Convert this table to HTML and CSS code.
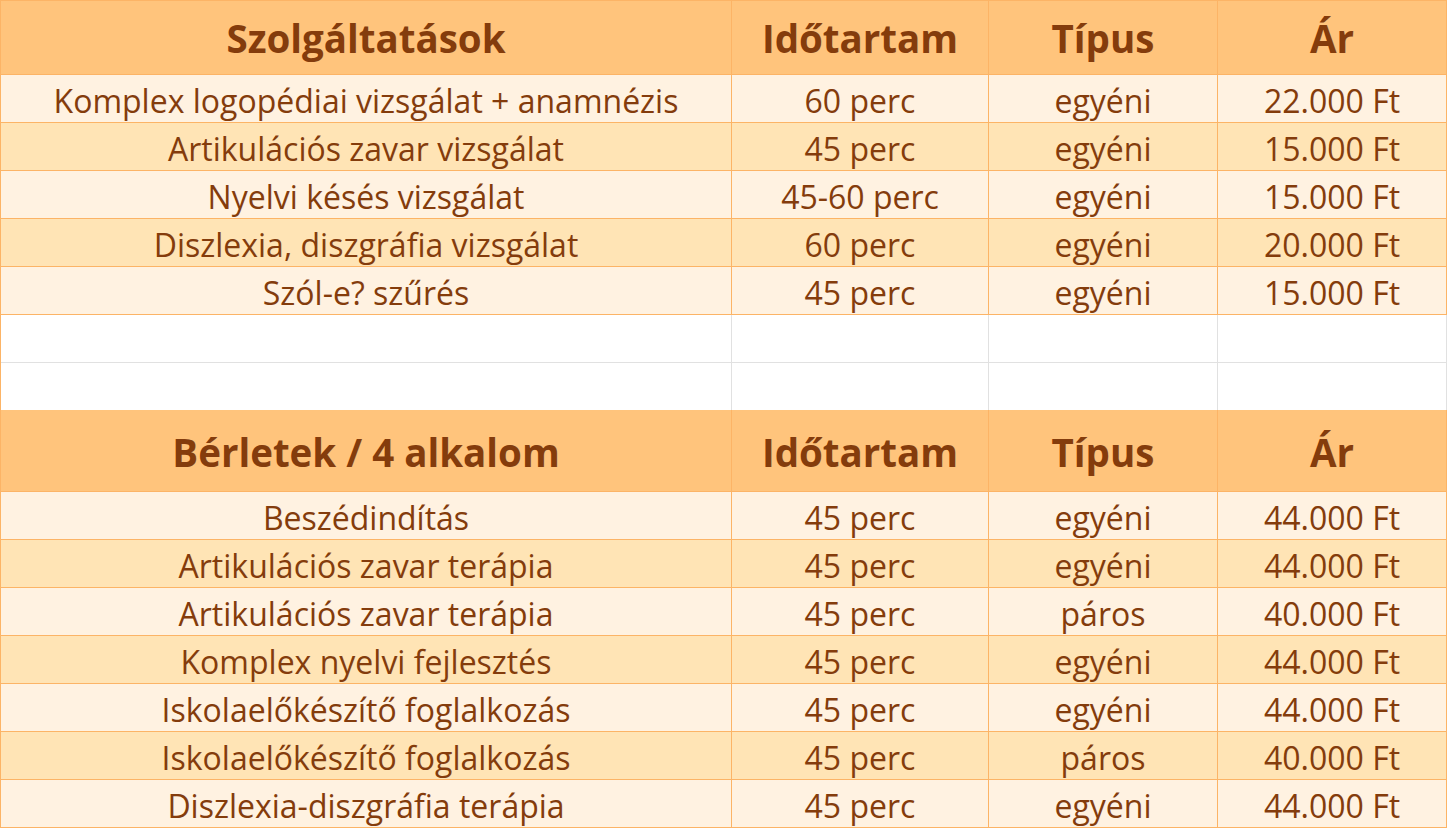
FILE: index.html
```html
<!DOCTYPE html>
<html lang="hu">
<head>
<meta charset="utf-8">
<title>Árlista</title>
<link rel="stylesheet" href="styles.css">
</head>
<body>
<div class="sheet">
  <div class="row head h1">
    <div class="cell">Szolgáltatások</div><div class="cell">Időtartam</div><div class="cell">Típus</div><div class="cell">Ár</div>
  </div>
  <div class="row light"><div class="cell">Komplex logopédiai vizsgálat + anamnézis</div><div class="cell">60 perc</div><div class="cell">egyéni</div><div class="cell">22.000 Ft</div></div>
  <div class="row dark"><div class="cell">Artikulációs zavar vizsgálat</div><div class="cell">45 perc</div><div class="cell">egyéni</div><div class="cell">15.000 Ft</div></div>
  <div class="row light"><div class="cell">Nyelvi késés vizsgálat</div><div class="cell">45-60 perc</div><div class="cell">egyéni</div><div class="cell">15.000 Ft</div></div>
  <div class="row dark"><div class="cell">Diszlexia, diszgráfia vizsgálat</div><div class="cell">60 perc</div><div class="cell">egyéni</div><div class="cell">20.000 Ft</div></div>
  <div class="row light"><div class="cell">Szól-e? szűrés</div><div class="cell">45 perc</div><div class="cell">egyéni</div><div class="cell">15.000 Ft</div></div>
  <div class="row empty"><div class="cell"></div><div class="cell"></div><div class="cell"></div><div class="cell"></div></div>
  <div class="row empty last"><div class="cell"></div><div class="cell"></div><div class="cell"></div><div class="cell"></div></div>
  <div class="row head h2">
    <div class="cell">Bérletek / 4 alkalom</div><div class="cell">Időtartam</div><div class="cell">Típus</div><div class="cell">Ár</div>
  </div>
  <div class="row light"><div class="cell">Beszédindítás</div><div class="cell">45 perc</div><div class="cell">egyéni</div><div class="cell">44.000 Ft</div></div>
  <div class="row dark"><div class="cell">Artikulációs zavar terápia</div><div class="cell">45 perc</div><div class="cell">egyéni</div><div class="cell">44.000 Ft</div></div>
  <div class="row light"><div class="cell">Artikulációs zavar terápia</div><div class="cell">45 perc</div><div class="cell">páros</div><div class="cell">40.000 Ft</div></div>
  <div class="row dark"><div class="cell">Komplex nyelvi fejlesztés</div><div class="cell">45 perc</div><div class="cell">egyéni</div><div class="cell">44.000 Ft</div></div>
  <div class="row light"><div class="cell">Iskolaelőkészítő foglalkozás</div><div class="cell">45 perc</div><div class="cell">egyéni</div><div class="cell">44.000 Ft</div></div>
  <div class="row dark"><div class="cell">Iskolaelőkészítő foglalkozás</div><div class="cell">45 perc</div><div class="cell">páros</div><div class="cell">40.000 Ft</div></div>
  <div class="row light"><div class="cell">Diszlexia-diszgráfia terápia</div><div class="cell">45 perc</div><div class="cell">egyéni</div><div class="cell">44.000 Ft</div></div>
</div>
</body>
</html>
```

FILE: styles.css
```css
html, body {
  margin: 0;
  padding: 0;
  background: #ffffff;
}

.sheet {
  width: 1447px;
  box-sizing: border-box;
  border-left: 1px solid #fcb466;
  border-top: 1px solid #fcb466;
  font-family: "Open Sans", Lato, sans-serif;
  color: #843c0c;
}

.row {
  display: grid;
  grid-template-columns: 731px 257px 229px 229px;
}

.cell {
  box-sizing: border-box;
  border-right: 1px solid #fcb466;
  border-bottom: 1px solid #fcb466;
  text-align: center;
  white-space: nowrap;
  overflow: hidden;
}

.light .cell,
.dark .cell {
  height: 48px;
  font-size: 32px;
  line-height: 45px;
  padding-top: 3px;
}

.light .cell { background: #fff2e1; }
.dark .cell { background: #ffe4b5; }

.head .cell {
  background: #ffc47c;
  font-weight: 700;
  font-size: 38.5px;
}

.h1 .cell {
  height: 74px;
  line-height: 72px;
  padding-top: 1px;
}

.h2 .cell {
  height: 82px;
  line-height: 78px;
  padding-top: 3px;
}

.empty .cell {
  height: 48px;
  background: #ffffff;
  border-right-color: #e1e1e1;
  border-bottom-color: #e1e1e1;
}

.empty.last .cell {
  height: 47px;
  border-bottom: none;
}
```
